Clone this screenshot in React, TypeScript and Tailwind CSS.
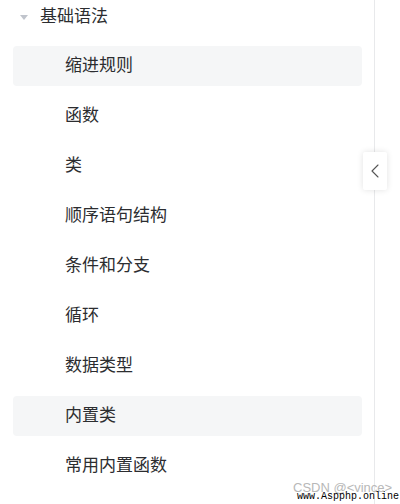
import { ChevronLeft } from 'lucide-react';

const items = [
  { label: '缩进规则', active: true },
  { label: '函数' },
  { label: '类' },
  { label: '顺序语句结构' },
  { label: '条件和分支' },
  { label: '循环' },
  { label: '数据类型' },
  { label: '内置类', active: true },
  { label: '常用内置函数' },
];

export default function App() {
  return (
    <div
      className="relative w-[400px] h-[504px] overflow-hidden bg-white text-[#2c2d30]"
      style={{ fontFamily: '"Liberation Sans", "Noto Sans CJK SC", sans-serif' }}
    >
      <div className="flex h-full">
        {/* sidebar tree */}
        <div className="w-[374px] pl-[13px] pr-[12px]">
          <div className="h-[41px] flex items-start pt-[5px]">
            <span className="ml-[7px] mr-[12px] mt-[10px] w-0 h-0 border-l-[4.5px] border-r-[4.5px] border-t-[5px] border-l-transparent border-r-transparent border-t-[#c0c4cc]" />
            <span className="text-[17px] leading-[24px]">基础语法</span>
          </div>
          {items.map((it) => (
            <div key={it.label} className="h-[50px] py-[5px]">
              <div
                className={`h-[40px] rounded-[4px] flex items-center pl-[52px] text-[17px] ${
                  it.active ? 'bg-[#f5f6f7]' : ''
                }`}
              >
                {it.label}
              </div>
            </div>
          ))}
        </div>
        {/* divider */}
        <div className="w-px h-full bg-[#e8e9eb]" />
        <div className="flex-1" />
      </div>

      {/* collapse toggle */}
      <button className="absolute left-[363px] top-[152px] w-[24px] h-[38px] bg-white rounded-[2px] shadow-[0_0_6px_rgba(0,0,0,0.12)] flex items-center justify-center text-[#555]">
        <ChevronLeft size={28} strokeWidth={1.1} />
      </button>

      {/* watermarks */}
      <div className="absolute left-[293px] top-[481px] text-[13px] leading-[14px] text-[#b8b8b8]">
        CSDN @&lt;vince&gt;
      </div>
      <div
        className="absolute left-[297px] top-[490px] text-[10px] leading-[13px] text-black"
        style={{ fontFamily: '"Liberation Mono", monospace' }}
      >
        www.Aspphp.online
      </div>
    </div>
  );
}
